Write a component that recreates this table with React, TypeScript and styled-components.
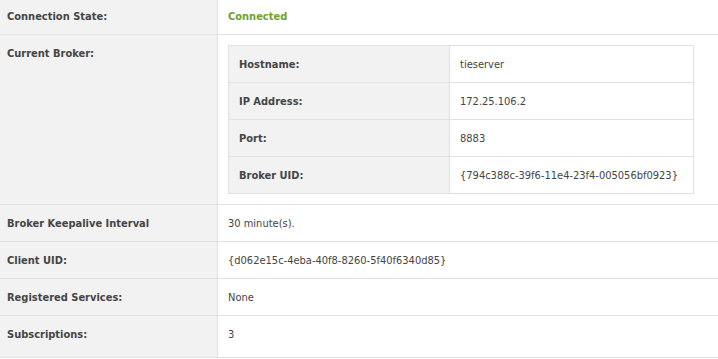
import React from "react";
import styled, { createGlobalStyle } from "styled-components";

const GlobalStyle = createGlobalStyle`
  html, body {
    margin: 0;
    padding: 0;
    background: #ffffff;
  }
  body {
    font-family: "DejaVu Sans Condensed", "DejaVu Sans", Tahoma, sans-serif;
    font-size: 11px;
    color: #444444;
    overflow: hidden;
  }
`;

const broker = [
  { label: "Hostname:", value: "tieserver" },
  { label: "IP Address:", value: "172.25.106.2" },
  { label: "Port:", value: "8883" },
  { label: "Broker UID:", value: "{794c388c-39f6-11e4-23f4-005056bf0923}" },
];

const details = [
  { label: "Broker Keepalive Interval", value: "30 minute(s)." },
  { label: "Client UID:", value: "{d062e15c-4eba-40f8-8260-5f40f6340d85}" },
  { label: "Registered Services:", value: "None" },
  { label: "Subscriptions:", value: "3" },
];

export default function App() {
  return (
    <>
      <GlobalStyle />
      <StatusTable>
        <Label>Connection State:</Label>
        <Value>
          <Status>Connected</Status>
        </Value>

        <Label>Current Broker:</Label>
        <Value $nested>
          <BrokerTable>
            {broker.map((row) => (
              <React.Fragment key={row.label}>
                <BrokerLabel>{row.label}</BrokerLabel>
                <BrokerValue>{row.value}</BrokerValue>
              </React.Fragment>
            ))}
          </BrokerTable>
        </Value>

        {details.map((row) => (
          <React.Fragment key={row.label}>
            <Label>{row.label}</Label>
            <Value>{row.value}</Value>
          </React.Fragment>
        ))}
      </StatusTable>
    </>
  );
}

const StatusTable = styled.div`
  display: grid;
  grid-template-columns: 218px 1fr;
  margin-top: -2px;
  line-height: 14px;

  /* last row carries a little extra room below */
  & > :nth-last-child(-n + 2) {
    padding-bottom: 15px;
  }
`;

const Label = styled.div`
  padding: 12px 10px 10px 7px;
  background: #f2f2f2;
  border-right: 1px solid #e1e1e1;
  border-bottom: 1px solid #e1e1e1;
  font-weight: bold;
  color: #454545;
`;

const Value = styled.div<{ $nested?: boolean }>`
  padding: ${(p) => (p.$nested ? "10px" : "12px 10px 10px")};
  background: #ffffff;
  border-bottom: 1px solid #e1e1e1;
`;

const Status = styled.span`
  font-weight: bold;
  color: #70a326;
`;

const BrokerTable = styled.div`
  display: grid;
  grid-template-columns: 221px 244px;
  width: max-content;
  border-top: 1px solid #e1e1e1;
  border-left: 1px solid #e1e1e1;
`;

const BrokerLabel = styled.div`
  padding: 12px 10px 10px;
  background: #f2f2f2;
  border-right: 1px solid #e1e1e1;
  border-bottom: 1px solid #e1e1e1;
  font-weight: bold;
  color: #454545;
`;

const BrokerValue = styled.div`
  padding: 12px 10px 10px;
  border-right: 1px solid #e1e1e1;
  border-bottom: 1px solid #e1e1e1;
  white-space: nowrap;
`;
